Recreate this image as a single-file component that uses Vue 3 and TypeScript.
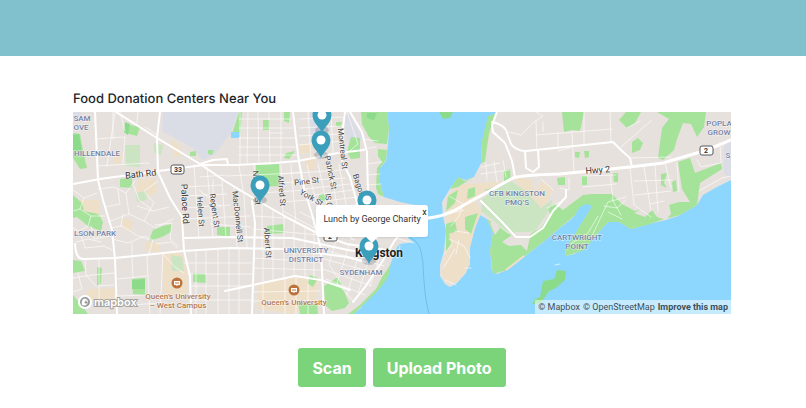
<script setup lang="ts">
import { ref } from 'vue'

interface MapLabel {
  text: string
  x: number
  y: number
  angle?: number
}

interface Pin {
  x: number
  y: number
}

const popupOpen = ref(true)

const westLand =
  'M73 112H387L389 128L388 145L386 161L380 168L380 184L384 197L400 202L424 207V216H408V238L413 242L400 244L397 247L390 265L386 277L378 287L371 295L365 300L361 308L353 314H73Z'
const eastLand =
  'M496 112L490 119L486 133L482 143L481 163L474 177L466 180L458 178L451 187L442 202L443 216L446 230L444 251L440 265L440 276L445 284L450 287L457 283L466 273L470 262L470 247L475 228L480 215L487 219L493 233L490 251L492 270L497 274L507 270L524 257L543 242L560 228L570 220L580 211L592 206L586 217L577 232L565 250L566 256L574 254L584 249L598 233L608 222L619 222L631 229L642 226L653 223L666 220L678 216L697 205L703 195L717 187L731 180V112Z'

const meadows: string[] = [
  'M73 133L80 134L83 151L87 168L80 169L73 158Z',
  'M125 124L140 127L137 136L125 133Z',
  'M73 195L82 203L84 211L98 214L103 222L101 231L88 226L77 217L73 218Z',
  'M94 217L101 217L102 229L94 228Z',
  'M120 179L132 177L132 188L120 187Z',
  'M149 241L153 230L163 226L172 224L171 232L162 237Z',
  'M73 260L81 261L85 271L73 273Z M97 267L102 268L101 283L97 287Z',
  'M132 279L145 278L145 295L133 294Z M73 295L83 307L88 314H73Z',
  'M193 273L206 274L206 283L193 282Z M217 227L230 227L230 237L217 235Z',
  'M190 152L196 151L196 156L190 156Z M208 150L214 150L212 155L208 154Z',
  'M256 165L279 164L280 186L258 187L256 180Z M263 120L270 120L270 130L263 130Z',
  'M284 112L290 112L289 123L284 121Z M231 137L239 112L242 112L240 137Z',
  'M367 112L387 112L389 128L387 144L375 143L369 137L362 124L361 112Z',
  'M351 137L360 138L360 158L351 159L347 152Z M336 122L342 122L341 127L336 126Z',
  'M378 149L387 150L386 160L380 168L380 184L384 197L378 194L376 188L377 168L382 162L378 156Z',
  'M267 226L283 224L284 233L268 234Z M324 286L338 277L349 303L345 308L332 311L325 305Z',
  'M298 302L317 304L318 314L300 314Z M310 275L318 278L313 287L307 283Z',
  'M286 153L295 151L289 159L284 158Z M319 195L325 193L325 202L319 199Z',
  'M376 289L382 277L391 264L388 277L378 291L362 306L354 314H348L360 305Z',
  'M495 114L488 116L482 140L481 164L485 161L489 134Z',
  'M474 177L465 181L458 177L450 189L458 187L467 181Z',
  'M485 190L504 184L504 170L510 169L511 181L496 188L487 192Z',
  'M468 189L475 187L475 196L467 199Z M448 196L458 190L455 203L446 211Z',
  'M446 224L455 221L457 231L449 234L451 244L446 252Z M465 217L478 213L471 234L465 229Z',
  'M562 112H584L580 131L572 130L564 132Z M575 152L580 152L579 158L575 157Z',
  'M584 151L589 151L589 157L585 158Z M557 178L565 177L565 185L558 185Z',
  'M582 176L587 176L587 185L582 185Z M613 173L618 173L618 182L614 182Z',
  'M626 112H641L635 123L627 128L619 120Z M632 142L638 138L643 143L640 150L632 153Z',
  'M657 112H706L704 127L697 137L691 124L683 123L677 139L674 150L663 160L658 158L662 128L669 119Z',
  'M678 162L690 158L695 173L721 163L722 169L700 183L697 205L680 215L665 219L662 207L679 202L690 202L682 189Z',
  'M661 174L667 173L664 183L667 188L661 185Z M672 182L676 180L677 191L673 192Z'
]

const pointGreens: string[] = [
  'M487 219L498 226L507 233L516 237L530 234L541 228L550 214L547 207L555 204L563 210L583 195L592 194L612 194L622 204L635 211L650 207L665 205L670 217L650 224L631 229L619 222L608 222L598 233L584 250L566 256L565 250L592 206L580 211L543 242L507 270L493 274L490 251L493 233Z'
]

const darkMeadows: string[] = [
  'M125 122L130 124L128 135L124 132Z',
  'M73 135L79 134L82 151L73 150Z',
  'M132 280L145 279L145 289L132 289Z',
  'M439 112H453L450 118L443 119Z',
  'M367 113L377 113L374 120L367 118Z'
]

const sandAreas: string[] = [
  'M300 144L313 144L311 153L299 154Z M306 157L316 156L314 171L305 169Z',
  'M113 154L122 152L120 165L113 163Z M137 180L156 178L157 192L142 200L136 193Z',
  'M89 289L115 288L114 303L98 306L83 299Z M162 252L181 251L188 272L188 301L163 292Z',
  'M258 284L296 276L319 278L316 300L293 314L258 309Z M145 241L160 243L159 253L145 250Z',
  'M122 218L132 220L131 231L123 229Z M75 200H100V221L83 211Z',
  'M447 196L460 184L483 183L502 181L474 200L482 211L475 228L470 247L470 265L457 283L446 283L442 273L446 252Z',
  'M515 178L531 179L535 192L543 181L553 189L546 205L539 208L534 198L520 193Z',
  'M171 139L180 145L181 155L174 158Z'
]

const builtAreas: string[] = [
  'M310 112L326 112L329 143L311 141Z M343 114L349 114L363 139L356 145L347 141Z',
  'M724 147L731 140V178L724 174Z',
  'M73 112H80L85 122H73Z'
]

const paleGreens: string[] = [
  'M125 145L140 145L140 167L126 166Z M154 143L163 145L161 155L154 153Z',
  'M171 255L182 257L184 271L172 271Z M136 193L146 191L147 200L137 202Z',
  'M482 199L510 180L528 193L541 208L553 199L547 214L535 231L517 235L506 231L493 220L481 211Z'
]

const majorRoads: string[] = [
  'M116 112L157 138L200 164L225 181L260 202L288 218L319 234L347 244L387 250',
  'M73 184L100 179L203 165L236 165L275 163L298 161L338 153L364 150',
  'M95 112L98 180L103 200L112 230L115 259L117 314',
  'M160 112L157 138L158 172L170 198L182 217L184 251L190 276L191 314',
  'M75 244Q76 260 84 259L115 258L183 251L230 248L286 249L347 257L365 262',
  'M184 238L230 237L292 238L348 250L391 256',
  'M252 201L255 223L252 314',
  'M293 112L296 138L299 162L304 188L313 218L321 249L324 314',
  'M345 112L343 128L342 161L350 177L357 203L370 240',
  'M350 112L362 132L367 152L368 194L385 227',
  'M353 302L365 287L382 262L395 240L398 237',
  'M225 291L295 276L321 280L350 290',
  'M200 164L213 160L227 159L228 165'
]

const coastRoads: string[] = [
  'M418 219Q445 218 464 205L513 178Q522 175 560 174L630 167L663 163L707 150L731 140',
  'M497 112L492 125L493 132L505 143L512 161L515 177',
  'M492 122Q502 124 506 130L511 144Q516 151 526 151L613 142L622 151L630 158L632 167',
  'M525 151L526 168L533 172L539 167L538 150',
  'M481 201L502 222L516 237L530 237L543 228L553 211L566 197L566 190'
]

const minorRoads: string[] = [
  'M95 139L125 137M96 166L149 163M115 112L107 166M113 139V112M120 112L125 131M138 112L137 124M145 127L156 134M125 137L123 163M98 189L114 187L126 193L135 181M118 190L120 204L105 207M126 193L129 214L108 222M129 214L144 221L154 203L144 191L158 181M134 186L139 200L151 209M110 228L122 226L138 236L150 240M121 226L123 214M112 239L128 243L145 236L153 240L148 257M132 256V243M155 225L172 223L170 239L178 246M156 244L171 242L177 248M137 206L153 211L169 207M144 221L155 228L173 219',
  'M73 190L84 198L80 209L73 211M84 198L97 193M80 209L91 216L88 226L79 231L73 228M91 216L105 216M91 226L94 239L110 236M80 231L85 248L104 246L112 250M76 242L88 239L101 242M73 278L92 275L115 273M85 259L86 275L96 286L114 285M99 259V303M78 273L82 289L73 292M117 279L147 276M147 257L150 314M118 296L145 295M132 258L133 278M163 253L160 314M164 255L175 267L184 273M119 306L160 303',
  'M196 251V314M206 250V314M218 250V314M229 249V314M239 248V314M184 263H251M188 274H252M191 286H252M191 300H252M194 165L199 239M207 166L213 238M222 181L226 238M234 188L237 248M244 193L247 248M185 187L222 185M184 196L227 194M184 208L230 205M184 219L250 216M200 177L225 175M211 224L250 227M199 190L221 207M213 180V206',
  'M240 112L240 164M248 112L247 164M258 112L259 163M269 112L270 163M281 112L281 162M239 119H291M239 128H293M239 138H295M239 147H296M239 155H297M270 133H283M300 119L343 117M299 128L343 126M299 136L343 134M299 145L343 141M308 112L311 158M319 112L322 155M331 112L333 153',
  'M226 176L298 173M239 166L243 190M254 165L257 200M281 165L283 215M291 165L296 223M281 174L302 172M281 183L305 181M260 193L307 190M280 202L311 200M298 173L341 170M301 181L345 178M304 189L350 184M307 196L353 190M310 203L357 197M315 211L360 204M307 165L324 235M318 164L334 236M329 162L343 238M339 164L352 240M300 212L355 240M283 211L340 242',
  'M262 203V250M273 209V281M284 216V280M294 221V277M305 226V277M314 232V279M254 216L286 218M253 229L319 235M253 258L320 262M253 268L321 270M263 250V314M285 279V314M296 276V314M308 278V314M252 292L320 291M252 301L323 301M336 240L329 264L340 282M349 245L337 283L354 302M361 247L347 295M372 249L358 294M382 251L370 286M324 250L384 266M324 259L379 274M323 269L372 286M326 279L365 295M347 112L358 144L344 156M362 139L378 141M363 149L376 147M366 164L382 162M366 175L380 174M367 185L381 184',
  'M481 167L500 163M481 174L509 170M486 163L487 180M494 162L497 182M503 160L506 177M509 132L521 135L534 122L543 116L536 112M536 121L537 151M536 135L612 129M543 122V132M558 133V149M572 132L574 173M584 112V145M610 112L611 142M630 158L671 157M652 120L621 147M558 151L570 148M627 128L640 121M541 179L553 190M449 196L463 204L459 216L451 226M448 214L464 210M455 231L469 233M449 239L464 246L470 258M455 249L444 267M459 240L456 254M445 280L456 285M452 244L445 253M630 167L634 205L651 217M644 167L651 211M655 165L658 212M665 163L671 188M677 163L679 192M634 181L672 180M635 195L671 191M650 204L664 201M697 160L701 167L721 163L720 143M699 191L722 178L731 176M560 188L569 190V178M583 187L616 184M583 176L616 175M610 175L613 199M592 236L608 202L626 197M612 199L621 215M604 206L617 208L626 200M547 208L560 202M569 245L588 233L598 216M608 212L622 219'
]

const districtLabels: MapLabel[] = [
  { text: 'SAM', x: 82, y: 121 },
  { text: 'OVE', x: 81, y: 130 },
  { text: 'HILLENDALE', x: 97, y: 156 },
  { text: 'LSON PARK', x: 95, y: 236 },
  { text: 'UNIVERSITY', x: 306, y: 253 },
  { text: 'DISTRICT', x: 306, y: 262 },
  { text: 'SYDENHAM', x: 361, y: 275 },
  { text: 'CFB KINGSTON', x: 517, y: 196 },
  { text: 'PMQ’S', x: 517, y: 205 },
  { text: 'CARTWRIGHT', x: 577, y: 240 },
  { text: 'POINT', x: 577, y: 249 },
  { text: 'POPLA', x: 719, y: 126 },
  { text: 'GROW', x: 719, y: 135 },
  { text: 'S', x: 728, y: 158 }
]

const roadLabels: MapLabel[] = [
  { text: 'Bath Rd', x: 141, y: 177, angle: -6 },
  { text: 'Hwy 2', x: 598, y: 173, angle: -4 },
  { text: 'Palace Rd', x: 182, y: 204, angle: 87 }
]

const streetLabels: MapLabel[] = [
  { text: 'Helen St', x: 198, y: 212, angle: 86 },
  { text: 'Regent St', x: 212, y: 211, angle: 82 },
  { text: 'MacDonnell St', x: 235, y: 217, angle: 84 },
  { text: 'Nelson St', x: 254, y: 188, angle: 86 },
  { text: 'Albert St', x: 265, y: 243, angle: 86 },
  { text: 'Alfred St', x: 279, y: 191, angle: 85 },
  { text: 'Pine St', x: 307, y: 184, angle: -7 },
  { text: 'York St', x: 310, y: 200, angle: 30 },
  { text: 'Patrick St', x: 328, y: 173, angle: 78 },
  { text: 'Montreal St', x: 340, y: 149, angle: 84 },
  { text: 'Bagot', x: 356, y: 185, angle: 72 },
  { text: 'IS G', x: 326, y: 201, angle: 82 }
]

const campusLabels: MapLabel[] = [
  { text: 'Queen’s University', x: 178, y: 299 },
  { text: '– West Campus', x: 178, y: 308 },
  { text: 'Queen’s University', x: 294, y: 305 }
]

const campusIcons: Pin[] = [
  { x: 177, y: 283 },
  { x: 294, y: 290 }
]

const pins: Pin[] = [
  { x: 322, y: 116 },
  { x: 321, y: 141 },
  { x: 260, y: 186 },
  { x: 367, y: 201 },
  { x: 369, y: 247 }
]

function place(label: MapLabel): string {
  return `translate(${label.x} ${label.y}) rotate(${label.angle ?? 0})`
}
</script>

<template>
  <div class="page">
    <header class="banner"></header>
    <main class="content">
      <h1 class="title">Food Donation Centers Near You</h1>
      <section class="map" aria-label="Map of food donation centers">
        <svg class="map-canvas" viewBox="73 112 658 202" preserveAspectRatio="xMidYMid slice">
          <rect class="water" x="73" y="112" width="658" height="202" />
          <path class="ferry" d="M410 238Q421 240 423 263Q424 296 429 314" />
          <path class="land" :d="westLand" />
          <path class="land" :d="eastLand" />
          <path
            class="airport"
            d="M163 112H238L230 135L225 140L215 154L203 160L193 148L175 138L162 131Z"
          />
          <path v-for="d in builtAreas" :key="d" class="built" :d="d" />
          <path v-for="d in sandAreas" :key="d" class="sand" :d="d" />
          <path v-for="d in meadows" :key="d" class="meadow" :d="d" />
          <path v-for="d in pointGreens" :key="d" class="meadow" :d="d" />
          <path v-for="d in paleGreens" :key="d" class="pale" :d="d" />
          <path class="land" d="M516 232L531 232L527 251L521 245L509 246L502 242Z M493 221L500 228L495 235L490 223Z M645 204L653 204L668 199L671 214L666 220L657 217L652 210L645 217L634 213L640 210Z" />
          <path class="sand-edge" d="M506 270L524 256" />
          <path v-for="d in darkMeadows" :key="d" class="meadow-dark" :d="d" />
          <path class="meadow-dark" d="M532 304L535 299L540 297L543 281L554 279L557 270L566 271L565 280L556 288L549 291L541 303Z" />
          <path class="water" d="M231 132H239V138H231Z M577 211Q584 201 592 206L582 221L574 220Z" />
          <path v-for="d in minorRoads" :key="d" class="road-minor" :d="d" />
          <path v-for="d in majorRoads" :key="d" class="road-major" :d="d" />
          <path v-for="(d, i) in coastRoads" :key="d" class="road-major" :class="{ highway: i === 0 }" :d="d" />
          <path class="road-minor" d="M555 265L560 264M465 268L471 268M399 239L414 243M400 246L397 258" />

          <g class="shield">
            <rect x="171" y="165" width="13" height="9" rx="2" />
            <text x="178" y="172">33</text>
            <rect x="700" y="146" width="13" height="9" rx="2" />
            <text x="706" y="153">2</text>
            <rect x="324" y="232" width="13" height="9" rx="2" />
            <text x="330" y="239">2</text>
          </g>

          <text v-for="l in districtLabels" :key="l.text" class="district" :transform="place(l)">{{ l.text }}</text>
          <text v-for="l in roadLabels" :key="l.text" class="road-name" :transform="place(l)">{{ l.text }}</text>
          <text v-for="l in streetLabels" :key="l.text" class="street-name" :transform="place(l)">{{ l.text }}</text>
          <text v-for="(l, i) in campusLabels" :key="i" class="campus" :transform="place(l)">{{ l.text }}</text>
          <g v-for="(c, i) in campusIcons" :key="i" :transform="`translate(${c.x} ${c.y})`">
            <circle class="campus-dot" r="5.5" />
            <path class="campus-glyph" d="M-3 -2H3V2H1L0 3L-1 2H-3Z" />
            <path class="campus-line" d="M-2 0H2" />
          </g>
          <text class="city" x="379" y="257">Kingston</text>

          <g v-for="(p, i) in pins" :key="i" :transform="`translate(${p.x} ${p.y})`">
            <ellipse class="pin-shadow" cx="0" cy="14" rx="7" ry="4" />
            <path class="pin" d="M0 17C-2 11 -9.5 7 -9.5 -1A9.5 9.5 0 0 1 9.5 -1C9.5 7 2 11 0 17Z" />
            <circle class="pin-hole" cx="0" cy="-1" r="4.5" />
          </g>

          <g class="brand">
            <circle class="brand-ring" cx="85" cy="302" r="6" />
            <path class="brand-drop" d="M82 305C81 299 84 298 86 299C89 300 88 304 86 305C85 306 83 305 82 305Z" />
            <path class="brand-star" d="M86 300L87 302L88 302L87 303L86 304L85 303L84 302L85 302Z" />
            <text class="brand-name" x="94" y="306">mapbox</text>
          </g>
        </svg>

        <div v-if="popupOpen" class="popup">
          <button class="popup-close" type="button" aria-label="Close popup" @click="popupOpen = false">x</button>
          Lunch by George Charity
        </div>
        <div class="attribution">
          <a href="#mapbox">© Mapbox</a>
          <a href="#openstreetmap">© OpenStreetMap</a>
          <a class="improve" href="#improve">Improve this map</a>
        </div>
      </section>
      <div class="actions">
        <button class="action" type="button">Scan</button>
        <button class="action" type="button">Upload Photo</button>
      </div>
    </main>
  </div>
</template>

<style>
body {
  margin: 0;
  background: #fff;
}
</style>

<style scoped>
.page {
  font-family: Inter, 'Liberation Sans', sans-serif;
  color: #212529;
}
.banner {
  height: 56px;
  background: #81c0cd;
}
.content {
  padding: 33px 75px 20px 73px;
}
.title {
  margin: 0;
  font-size: 13px;
  line-height: 20px;
  font-weight: 500;
  padding-bottom: 3px;
  text-rendering: geometricPrecision;
}
.map {
  position: relative;
  overflow: hidden;
  font-family: Roboto, 'Liberation Sans', sans-serif;
}
.map-canvas {
  display: block;
  width: 100%;
}
.water {
  fill: #8dd7ff;
}
.land {
  fill: #e7e1dd;
}
.airport,
.built {
  fill: #dadce6;
}
.sand {
  fill: #eedfc9;
}
.sand-edge {
  stroke: #efdfcb;
  stroke-width: 2;
}
.meadow {
  fill: #a4e399;
}
.meadow-dark {
  fill: #8bdb8b;
}
.pale {
  fill: #cbe5c3;
}
.road-minor,
.road-major,
.ferry {
  fill: none;
  stroke: #fff;
  stroke-linejoin: round;
  stroke-linecap: round;
}
.road-minor {
  stroke-width: 1;
  opacity: 0.6;
}
.road-major {
  stroke-width: 2;
}
.highway {
  stroke-width: 3;
}
.ferry {
  stroke: #72bdec;
}
.shield rect {
  fill: #fff;
  stroke: #55585c;
  stroke-width: 1;
}
.shield text {
  font: 700 7px Roboto, sans-serif;
  fill: #333;
  text-anchor: middle;
}
.district,
.road-name,
.street-name,
.campus,
.city {
  text-anchor: middle;
  paint-order: stroke;
  stroke: rgba(255, 255, 255, 0.7);
  stroke-width: 1px;
}
.district {
  font-size: 8px;
  font-weight: 500;
  fill: #7182a8;
}
.road-name {
  font-size: 9px;
  fill: #333;
}
.street-name {
  font-size: 8px;
  fill: #444;
}
.campus {
  font-size: 8px;
  font-weight: 500;
  fill: #b5774a;
}
.city {
  font-size: 12px;
  font-weight: 700;
  fill: #222;
}
.campus-dot {
  fill: #bd743c;
}
.campus-glyph {
  fill: #fff;
}
.campus-line {
  stroke: #bd743c;
}
.pin {
  fill: #3b9fbc;
}
.pin-hole {
  fill: #fff;
}
.pin-shadow {
  fill: #234;
  opacity: 0.2;
}
.brand-ring {
  fill: #9a9c9b;
  stroke: #fff;
  stroke-width: 2;
}
.brand-drop {
  fill: #fff;
}
.brand-star {
  fill: #999;
}
.brand-name {
  font: 600 11px Inter, sans-serif;
  fill: #fff;
  stroke: #a5a39f;
  stroke-width: 2px;
  paint-order: stroke;
}
.popup {
  position: absolute;
  top: 46%;
  left: 37%;
  padding: 8px 7px 12px;
  background: #fff;
  border-radius: 3px;
  box-shadow: 0 1px 2px rgba(0, 0, 0, 0.1);
  font-size: 9px;
  line-height: 12px;
  white-space: nowrap;
  color: #333;
}
.popup::after {
  content: '';
  position: absolute;
  top: 100%;
  left: 50%;
  margin-left: -6px;
  border: 6px solid transparent;
  border-top-color: #fff;
  border-bottom: 0;
}
.popup-close {
  position: absolute;
  top: 2px;
  right: 0;
  padding: 0 1px;
  border: 0;
  background: none;
  font: 9px/10px Roboto, sans-serif;
  color: #222;
  cursor: pointer;
}
.attribution {
  position: absolute;
  right: 0;
  bottom: 0;
  display: flex;
  gap: 3px;
  padding: 0 3px;
  background: rgba(255, 255, 255, 0.5);
  font-size: 9px;
  line-height: 14px;
  white-space: nowrap;
}
.attribution a {
  color: #3f4f58;
  text-decoration: none;
}
.attribution .improve {
  font-weight: 700;
}
.actions {
  display: flex;
  justify-content: center;
  gap: 7px;
  padding-top: 34px;
}
.action {
  padding: 10px 14px 9px;
  border: 0;
  border-radius: 3px;
  background: #7bd47a;
  color: #fff;
  font: 700 16px/20px Inter, sans-serif;
  cursor: pointer;
}
</style>
